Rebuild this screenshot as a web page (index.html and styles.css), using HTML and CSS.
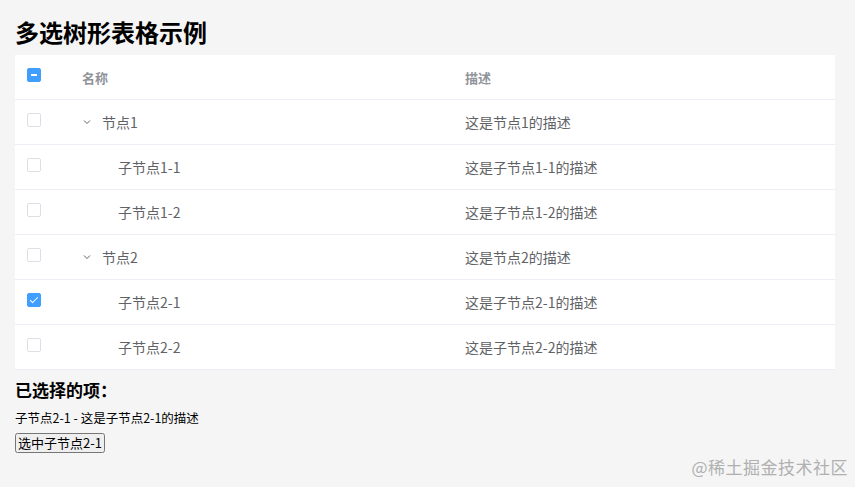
FILE: index.html
```html
<!DOCTYPE html>
<html lang="zh-CN">

<head>
   <meta charset="UTF-8" />
   <meta name="viewport" content="width=device-width, initial-scale=1" />
   <title>多选树形表格示例</title>
   <link rel="stylesheet" href="styles.css">
</head>

<body>
   <div class="page">
      <h2 class="title">多选树形表格示例</h2>

      <div class="tree-table">
         <div class="row head">
            <div class="col-check"><span class="checkbox indeterminate"></span></div>
            <div class="col-name">名称</div>
            <div class="col-desc">描述</div>
         </div>
         <div class="row">
            <div class="col-check"><span class="checkbox"></span></div>
            <div class="col-name">
               <span class="expand"><svg width="10" height="10" viewBox="0 0 10 10"><path d="M2 3.5 L5 6.5 L8 3.5" fill="none" stroke="#606266" stroke-width="1"/></svg></span>节点1
            </div>
            <div class="col-desc">这是节点1的描述</div>
         </div>
         <div class="row">
            <div class="col-check"><span class="checkbox"></span></div>
            <div class="col-name child">子节点1-1</div>
            <div class="col-desc">这是子节点1-1的描述</div>
         </div>
         <div class="row">
            <div class="col-check"><span class="checkbox"></span></div>
            <div class="col-name child">子节点1-2</div>
            <div class="col-desc">这是子节点1-2的描述</div>
         </div>
         <div class="row">
            <div class="col-check"><span class="checkbox"></span></div>
            <div class="col-name">
               <span class="expand"><svg width="10" height="10" viewBox="0 0 10 10"><path d="M2 3.5 L5 6.5 L8 3.5" fill="none" stroke="#606266" stroke-width="1"/></svg></span>节点2
            </div>
            <div class="col-desc">这是节点2的描述</div>
         </div>
         <div class="row">
            <div class="col-check"><span class="checkbox checked"></span></div>
            <div class="col-name child">子节点2-1</div>
            <div class="col-desc">这是子节点2-1的描述</div>
         </div>
         <div class="row">
            <div class="col-check"><span class="checkbox"></span></div>
            <div class="col-name child">子节点2-2</div>
            <div class="col-desc">这是子节点2-2的描述</div>
         </div>
      </div>

      <h3 class="selected-title">已选择的项：</h3>
      <div class="selected-item">子节点2-1 - 这是子节点2-1的描述</div>
      <button class="select-btn">选中子节点2-1</button>
   </div>

   <div class="watermark">@稀土掘金技术社区</div>
</body>

</html>
```

FILE: styles.css
```css
:root {
   --primary: #409eff;
   --bg: #f5f5f5;
   --border: #ebeef5;
   --text: #606266;
   --head-text: #909399;
}

* {
   box-sizing: border-box;
}

body {
   margin: 0;
   background: var(--bg);
   font-family: "Noto Sans CJK SC", "Noto Sans", sans-serif;
   color: #000;
   min-height: 100vh;
}

.page {
   padding: 15px 20px 0 15px;
}

.title {
   margin: 0 0 6px;
   font-size: 24px;
   line-height: 34px;
   font-weight: 700;
}

.tree-table {
   background: #fff;
   width: 820px;
}

.row {
   display: flex;
   align-items: center;
   height: 45px;
   border-bottom: 1px solid var(--border);
   font-size: 14px;
   color: var(--text);
}

.row.head {
   font-size: 13px;
   font-weight: 700;
   color: var(--head-text);
}

.col-check {
   width: 57px;
   padding-left: 12px;
   display: flex;
   align-items: center;
   margin-top: -4px;
}

.col-name {
   width: 383px;
   padding-left: 10px;
   display: flex;
   align-items: center;
}

.col-name.child {
   padding-left: 46px;
}

.col-desc {
   flex: 1;
   padding-left: 10px;
}

.expand {
   width: 20px;
   display: inline-flex;
   align-items: center;
}

.checkbox {
   width: 14px;
   height: 14px;
   border: 1px solid #dcdfe6;
   border-radius: 2px;
   background: #fff;
   position: relative;
}

.checkbox.checked,
.checkbox.indeterminate {
   background: var(--primary);
   border-color: var(--primary);
}

.checkbox.indeterminate::after {
   content: "";
   position: absolute;
   left: 3px;
   right: 3px;
   top: 5px;
   height: 2px;
   background: #fff;
}

.checkbox.checked::after {
   content: "";
   position: absolute;
   left: 4px;
   top: 1px;
   width: 3px;
   height: 7px;
   border: 1px solid #fff;
   border-left: 0;
   border-top: 0;
   transform: rotate(45deg);
}

.selected-title {
   margin: 10px 0 0;
   font-size: 17px;
   line-height: 20px;
   font-weight: 700;
}

.selected-item {
   margin-top: 9px;
   font-size: 12.5px;
   line-height: 18px;
}

.select-btn {
   margin-top: 6px;
   font-family: "Noto Sans CJK SC", sans-serif;
   font-size: 13px;
   line-height: 14px;
   padding: 1px 1px;
}

.watermark {
   position: absolute;
   right: 7px;
   bottom: 8px;
   font-size: 17px;
   color: #b0b0b0;
   font-family: "Noto Sans CJK SC", sans-serif;
   letter-spacing: 0.5px;
}
```
